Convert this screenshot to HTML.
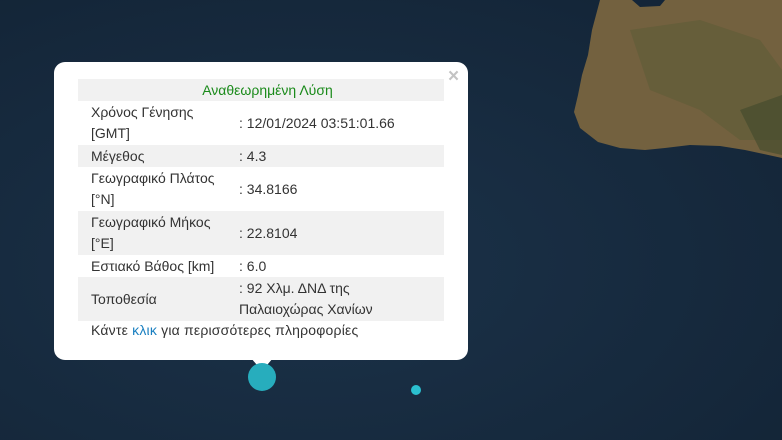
<!DOCTYPE html>
<html><head><meta charset="utf-8"><style>
body{margin:0;width:782px;height:440px;overflow:hidden;background:#172a3d;font-family:"Liberation Sans",Arial,sans-serif;position:relative}
.pop{position:absolute;left:54px;top:62px;width:414px;height:298px;background:#fff;border-radius:11px}
.tip{position:absolute;left:251px;top:358px;width:0;height:0;border-left:11px solid transparent;border-right:11px solid transparent;border-top:13px solid #fff}
.x{position:absolute;left:448px;top:66px;color:#c3c3c3;font-size:19px;font-weight:bold}
table{position:absolute;left:78px;top:79px;width:366px;border-collapse:collapse;font-size:14px;color:#333}
td{padding:0 0 0 13px;line-height:21px}
tr.g{background:#f1f1f1}
td.v{padding-left:0}
.hd{text-align:center;color:#1a8a1a;height:22px}
.link{position:absolute;left:91px;top:322px;font-size:14px;color:#333;letter-spacing:0.2px}
.link span{color:#1a7fc0}
</style></head><body>
<svg width="782" height="440" style="position:absolute;left:0;top:0">
<defs><radialGradient id="s" cx="0.4" cy="0.6" r="0.8"><stop offset="0" stop-color="#1b3249"/><stop offset="1" stop-color="#132436"/></radialGradient></defs>
<rect width="782" height="440" fill="url(#s)"/>
<path d="M600 0 L596 15 L592 30 L588 55 L582 75 L578 95 L574 112 L580 128 L598 142 L620 148 L645 150 L665 148 L690 145 L720 146 L745 150 L782 158 L782 0 L665 0 L660 6 L640 7 L632 0 Z" fill="#73613f"/>
<path d="M630 30 L700 20 L760 40 L782 70 L782 140 L740 140 L700 110 L650 90 Z" fill="#5a5c36" opacity="0.5"/>
<path d="M740 110 L782 95 L782 155 L760 150 Z" fill="#3f4a2c" opacity="0.6"/>
</svg>
<div class="pop"></div>
<div class="tip"></div>
<div class="x">×</div>
<table>
<tr class="g"><td colspan="2" class="hd">Αναθεωρημένη Λύση</td></tr>
<tr style="height:44px"><td style="width:148px">Χρόνος Γένησης<br>[GMT]</td><td class="v">: 12/01/2024 03:51:01.66</td></tr>
<tr class="g" style="height:22px"><td>Μέγεθος</td><td class="v">: 4.3</td></tr>
<tr style="height:44px"><td>Γεωγραφικό Πλάτος<br>[°N]</td><td class="v">: 34.8166</td></tr>
<tr class="g" style="height:44px"><td>Γεωγραφικό Μήκος<br>[°E]</td><td class="v">: 22.8104</td></tr>
<tr style="height:22px"><td>Εστιακό Βάθος [km]</td><td class="v">: 6.0</td></tr>
<tr class="g" style="height:44px"><td>Τοποθεσία</td><td class="v">: 92 Χλμ. ΔΝΔ της<br>Παλαιοχώρας Χανίων</td></tr>
</table>
<div class="link">Κάντε <span>κλικ</span> για περισσότερες πληροφορίες</div>
<div style="position:absolute;left:248px;top:363px;width:28px;height:28px;border-radius:50%;background:#27adbd"></div>
<div style="position:absolute;left:411px;top:385px;width:10px;height:10px;border-radius:50%;background:#2bc0d0"></div>
</body></html>
